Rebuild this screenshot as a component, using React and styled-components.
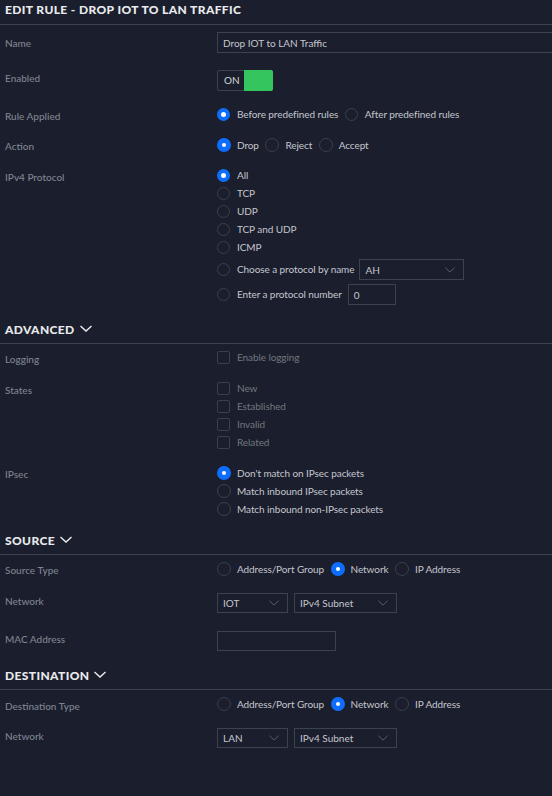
import React from "react";
import styled, { createGlobalStyle } from "styled-components";

const Global = createGlobalStyle`
  html, body { margin: 0; padding: 0; background: #1b1e2d; }
  body { font-family: Lato, "Open Sans", sans-serif; font-size: 10px; }
`;
const Page = styled.div`
  width: 552px; height: 796px; overflow: hidden; background: #1b1e2d; color: #c4c7cd;
`;
const Heading = styled.div`
  box-sizing: content-box; display: flex; align-items: center; gap: 5px;
  height: ${(p) => p.$h || 21}px;
  margin-top: ${(p) => p.$mt || 0}px;
  margin-bottom: 7px;
  padding-left: 5px;
  border-bottom: 1px solid #3c434f;
  font-size: 12px; font-weight: 900; letter-spacing: 0.38px; color: #e8eaec;
`;
const HeadingText = styled.span`
  display: block; margin-top: -6px;
`;
const HeadingIcon = styled.span`
  display: flex; margin-top: -8px;
`;
const Row = styled.div`
  display: grid; grid-template-columns: 217px 1fr;
  min-height: ${(p) => p.$h}px;
`;
const Label = styled.div`
  padding-left: 5px; padding-top: ${(p) => p.$pt ?? 5}px;
  line-height: 14px; color: #7f8590; font-weight: 500;
`;
const Options = styled.div`
  display: flex; gap: 6.5px; align-items: flex-start; height: 14px;
`;
const Stack = styled.div`
  display: flex; flex-direction: column; gap: 4px;
`;
const Option = styled.div`
  display: flex; align-items: flex-start; height: 14px; white-space: nowrap;
  gap: ${(p) => (p.$tall ? 6 : 7)}px;
  line-height: ${(p) => (p.$tall ? 15 : 13)}px;
  letter-spacing: -0.08px;
  color: ${(p) => (p.$muted ? "#72777f" : "#c4c7cd")};
`;
const RadioDot = styled.span`
  box-sizing: border-box; border-radius: 50%; flex: none;
  width: ${(p) => (p.$tall ? 14 : 13)}px; height: ${(p) => (p.$tall ? 14 : 13)}px;
  border: 1px solid #39404d;
  ${(p) => p.$on && `
    border: ${p.$tall ? 5 : 4.5}px solid #0d6efd; background: #fff;
  `}
`;
const Box = styled.span`
  box-sizing: border-box; width: 13px; height: 13px; border-radius: 2px; flex: none;
  border: 1px solid #39404d;
`;
const Field = styled.div`
  box-sizing: border-box; display: flex; align-items: center; justify-content: space-between;
  width: ${(p) => p.$w}px; height: ${(p) => p.$ht || 20}px; flex: none;
  padding: 0 8px 0 5px; border: 1px solid #3c434f; color: #c4c7cd; line-height: 14px;
  letter-spacing: 0;
`;
const SelectRow = styled.div`
  display: flex; gap: 6px;
`;
const Toggle = styled.div`
  box-sizing: border-box; display: flex; width: 56px; height: 21px; border: 1px solid #3c434f; border-radius: 2px;
`;
const ToggleText = styled.span`
  box-sizing: border-box; width: 26px; padding-left: 6px; line-height: 19px; color: #d4d6da;
`;
const ToggleKnob = styled.span`
  flex: 1; margin: -1px -1px -1px 0; background: #35c55e; border-radius: 0 2px 2px 0;
`;
const InlineOption = styled(Option)`
  height: 21px; align-items: center;
`;
const InlineField = styled(Field)`
  margin-left: ${(p) => p.$ml}px;
`;

const Chevron = ({ size = 12, color = "#e8eaec", sw = 1.4 }) => (
  <svg width={size} height={size * 0.6} viewBox="0 0 12 7" fill="none" stroke={color} strokeWidth={sw}>
    <path d="M0.5 0.8 L6 6 L11.5 0.8" />
  </svg>
);
const Caret = () => <Chevron size={10} color="#5d6571" sw={1.1} />;
const SectionChevron = () => <HeadingIcon><Chevron /></HeadingIcon>;
const Radio = ({ on, tall, children }) => (
  <Option $tall={tall}><RadioDot $on={on} $tall={tall} />{children}</Option>
);
const Check = ({ children }) => (
  <Option $muted><Box />{children}</Option>
);
const Select = ({ w, children, ht }) => (
  <Field $w={w} $ht={ht}><span>{children}</span><Caret /></Field>
);
const SourceRows = ({ label, net, pt = 1 }) => (
  <>
    <Row $h={31}>
      <Label $pt={pt}>{label}</Label>
      <Options>
        <Radio tall>Address/Port Group</Radio>
        <Radio tall on>Network</Radio>
        <Radio tall>IP Address</Radio>
      </Options>
    </Row>
    <Row $h={38}>
      <Label $pt={1}>Network</Label>
      <SelectRow>
        <Select w={71}>{net}</Select>
        <Select w={103}>IPv4 Subnet</Select>
      </SelectRow>
    </Row>
  </>
);

export default function App() {
  return (
    <Page>
      <Global />
      <Heading $h={24}><HeadingText>EDIT RULE - DROP IOT TO LAN TRAFFIC</HeadingText></Heading>
      <Row $h={38}>
        <Label $pt={4}>Name</Label>
        <Field $w={340} $ht={21}>Drop IOT to LAN Traffic</Field>
      </Row>
      <Row $h={38}>
        <Label $pt={1}>Enabled</Label>
        <Toggle><ToggleText>ON</ToggleText><ToggleKnob /></Toggle>
      </Row>
      <Row $h={30}>
        <Label $pt={1}>Rule Applied</Label>
        <Options>
          <Radio on>Before predefined rules</Radio>
          <Radio>After predefined rules</Radio>
        </Options>
      </Row>
      <Row $h={31}>
        <Label $pt={1}>Action</Label>
        <Options>
          <Radio tall on>Drop</Radio>
          <Radio tall>Reject</Radio>
          <Radio tall>Accept</Radio>
        </Options>
      </Row>
      <Row $h={136}>
        <Label $pt={1}>IPv4 Protocol</Label>
        <Stack>
          <Radio on>All</Radio>
          <Radio>TCP</Radio>
          <Radio>UDP</Radio>
          <Radio>TCP and UDP</Radio>
          <Radio>ICMP</Radio>
          <InlineOption>
            <RadioDot />Choose a protocol by name
            <InlineField $ml={-2} $w={105} $ht={21}><span>AH</span><Caret /></InlineField>
          </InlineOption>
          <InlineOption>
            <RadioDot />Enter a protocol number
            <InlineField $ml={-1} $w={48} $ht={21}>0</InlineField>
          </InlineOption>
        </Stack>
      </Row>

      <Heading $mt={17}><HeadingText>ADVANCED</HeadingText><SectionChevron /></Heading>
      <Row $h={31}>
        <Label $pt={1}>Logging</Label>
        <Stack><Check>Enable logging</Check></Stack>
      </Row>
      <Row $h={84}>
        <Label $pt={1}>States</Label>
        <Stack>
          <Check>New</Check>
          <Check>Established</Check>
          <Check>Invalid</Check>
          <Check>Related</Check>
        </Stack>
      </Row>
      <Row $h={54}>
        <Label $pt={1}>IPsec</Label>
        <Stack>
          <Radio tall on>Don't match on IPsec packets</Radio>
          <Radio tall>Match inbound IPsec packets</Radio>
          <Radio tall>Match inbound non-IPsec packets</Radio>
        </Stack>
      </Row>

      <Heading $mt={13}><HeadingText>SOURCE</HeadingText><SectionChevron /></Heading>
      <SourceRows label="Source Type" net="IOT" />
      <Row $h={37}>
        <Label $pt={1}>MAC Address</Label>
        <Field $w={119} />
      </Row>

      <Heading><HeadingText>DESTINATION</HeadingText><SectionChevron /></Heading>
      <SourceRows label="Destination Type" net="LAN" pt={2} />
    </Page>
  );
}
